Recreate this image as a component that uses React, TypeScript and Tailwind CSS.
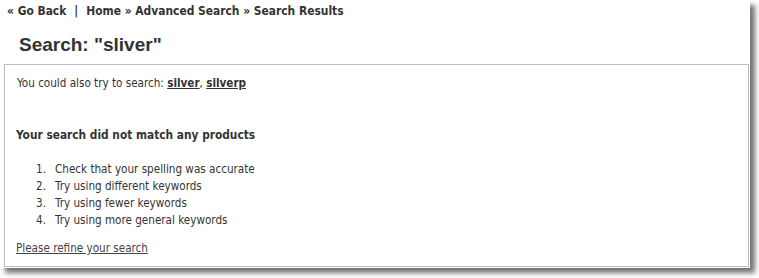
import React from 'react';

const tips = [
  'Check that your spelling was accurate',
  'Try using different keywords',
  'Try using fewer keywords',
  'Try using more general keywords',
];

export default function App() {
  return (
    <div className="w-[759px] h-[278px] bg-white">
      <div className="w-[750px] h-[268px] bg-white shadow-[5px_5px_5px_rgba(0,0,0,0.55)] text-[#333] font-['DejaVu_Sans_Condensed','DejaVu_Sans',sans-serif]">
        {/* Breadcrumb */}
        <div className="pl-[7px] pt-[3px] h-[20px] text-[11.9px] leading-[16px] font-bold">
          <span>« Go Back</span>
          <span className="px-[8px]">|</span>
          <span>Home » Advanced Search » Search Results</span>
        </div>

        {/* Heading */}
        <h1 className="pl-[19px] mt-[14px] h-[30px] text-[19px] leading-[22px] font-bold font-['Liberation_Sans',Arial,sans-serif]">
          Search: "sliver"
        </h1>

        {/* Results box */}
        <div className="ml-[4px] w-[745px] h-[203px] border border-[#bdbdbd] px-[12px] pt-[10px] text-[11.6px] leading-[17px]">
          <p>
            You could also try to search:{' '}
            <a href="#" className="font-bold underline">silver</a>,{' '}
            <a href="#" className="font-bold underline">silverp</a>
          </p>

          <p className="mt-[35px] -ml-[1px] font-bold text-[11.8px]">Your search did not match any products</p>

          <ol className="mt-[17px] pl-[19px]">
            {tips.map((t, i) => (
              <li key={t} className="flex">
                <span className="w-[19px]">{i + 1}.</span>
                <span>{t}</span>
              </li>
            ))}
          </ol>

          <a href="#" className="block mt-[11px] -ml-[1px] underline text-[#444]">Please refine your search</a>
        </div>
      </div>
    </div>
  );
}
